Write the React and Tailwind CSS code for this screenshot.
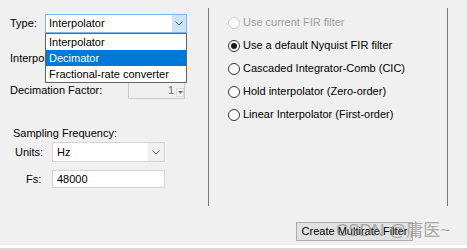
import { useState } from "react"

const FONT = { fontFamily: '"Liberation Sans", Arial, sans-serif' }

function Chevron({ className = "" }) {
  return (
    <svg width="8" height="5" viewBox="0 0 8 5" className={className}>
      <path d="M0.5 0.5 L4 4 L7.5 0.5" fill="none" stroke="#606060" strokeWidth="1" />
    </svg>
  )
}

function Radio({ label, checked, disabled }) {
  return (
    <div className="flex h-[23px] items-center gap-[3px]">
      <span
        className={`flex h-[12px] w-[12px] items-center justify-center rounded-full border bg-white ${
          disabled ? "border-[#cccccc]" : "border-[#333333]"
        }`}
      >
        {checked && <span className="h-[6px] w-[6px] rounded-full bg-[#1a1a1a]" />}
      </span>
      <span className={disabled ? "text-[#a0a0a0]" : "text-black"}>{label}</span>
    </div>
  )
}

/**
 * Multirate filter dialog, with the Type combo opened.
 */
export default function App() {
  const [type] = useState("Interpolator")
  const options = ["Interpolator", "Decimator", "Fractional-rate converter"]

  return (
    <div
      className="relative flex h-[250px] w-[467px] flex-col overflow-hidden bg-[#f0f0f0] text-[11px] text-black"
      style={FONT}
    >
      <div className="flex h-[206px]">
        {/* left column */}
        <div className="relative w-[208px] pl-[10px] pt-[14px]">
          <div className="flex h-[19px] items-center">
            <span className="w-[35px]">Type:</span>
            <div className="flex h-[19px] w-[142px] items-center border border-[#7eb4ea] bg-white">
              <span className="flex-1 pl-[3px]">{type}</span>
              <span className="flex h-full w-[14px] items-center justify-center bg-[#cce4f7]">
                <Chevron />
              </span>
            </div>
          </div>

          <div className="mt-[16px] flex h-[18px] items-center">
            <span className="w-[118px]">Interpolation Factor:</span>
            <div className="h-[18px] w-[57px] border border-[#cccccc]" />
          </div>

          <div className="mt-[14px] flex h-[18px] items-center">
            <span className="w-[118px]">Decimation Factor:</span>
            <div className="flex h-[18px] w-[57px] items-center border border-[#cccccc] bg-[#f0f0f0]">
              <span className="flex-1 pr-[2px] text-right text-[#6d6d6d]">1</span>
              <span className="mt-[5px] flex h-[9px] w-[8px] items-center justify-center border border-[#d9d9d9] bg-[#f7f7f7]">
                <svg width="5" height="3" viewBox="0 0 5 3">
                  <path d="M0 0 L5 0 L2.5 3 Z" fill="#6d6d6d" />
                </svg>
              </span>
            </div>
          </div>

          <div className="mt-[26px] h-[16px] pl-[3px] leading-[16px]">Sampling Frequency:</div>

          <div className="mt-[1px] flex h-[20px] items-center pl-[5px]">
            <span className="w-[37px]">Units:</span>
            <div className="flex h-[20px] w-[113px] items-center border border-[#d4d4d4] bg-white">
              <span className="flex-1 pl-[4px]">Hz</span>
              <span className="flex h-full w-[16px] items-center justify-center bg-[#f0f0f0]">
                <Chevron />
              </span>
            </div>
          </div>

          <div className="mt-[8px] flex h-[18px] items-center pl-[5px]">
            <span className="w-[37px] pl-[11px]">Fs:</span>
            <div className="flex h-[18px] w-[113px] items-center border border-[#d4d4d4] bg-white pl-[4px]">
              48000
            </div>
          </div>

          {/* opened list of the Type combo */}
          <div className="absolute left-[45px] top-[33px] w-[142px] border border-[#646464] bg-white">
            {options.map((o) => (
              <div
                key={o}
                className={`flex h-[16px] items-center pl-[3px] ${
                  o === "Decimator" ? "bg-[#0078d7] text-white" : ""
                }`}
              >
                {o}
              </div>
            ))}
          </div>
        </div>

        {/* filter choice panel */}
        <div className="mt-[8px] h-[198px] w-[240px] border-l border-r border-[#7a7a7a] pl-[19px] pt-[3px]">
          <Radio label="Use current FIR filter" disabled />
          <Radio label="Use a default Nyquist FIR filter" checked />
          <Radio label="Cascaded Integrator-Comb (CIC)" />
          <Radio label="Hold interpolator (Zero-order)" />
          <Radio label="Linear Interpolator (First-order)" />
        </div>
      </div>

      <div className="mt-[16px] flex justify-end pr-[54px]">
        <button
          type="button"
          className="h-[19px] w-[117px] border border-[#adadad] bg-[#e1e1e1] text-[11px]"
        >
          Create Multirate Filter
        </button>
      </div>

      <div className="mt-[4px] h-[3px] bg-white" />
      <div className="h-[2px] bg-[#d9d9d9]" />

      <span
        className="absolute left-[336px] top-[221px] text-[17px] leading-[20px] text-[#7a7a7a] opacity-60"
        style={{ fontFamily: '"Liberation Sans", "Noto Sans CJK SC", sans-serif' }}
      >
        CSDN @庸医~
      </span>
    </div>
  )
}
